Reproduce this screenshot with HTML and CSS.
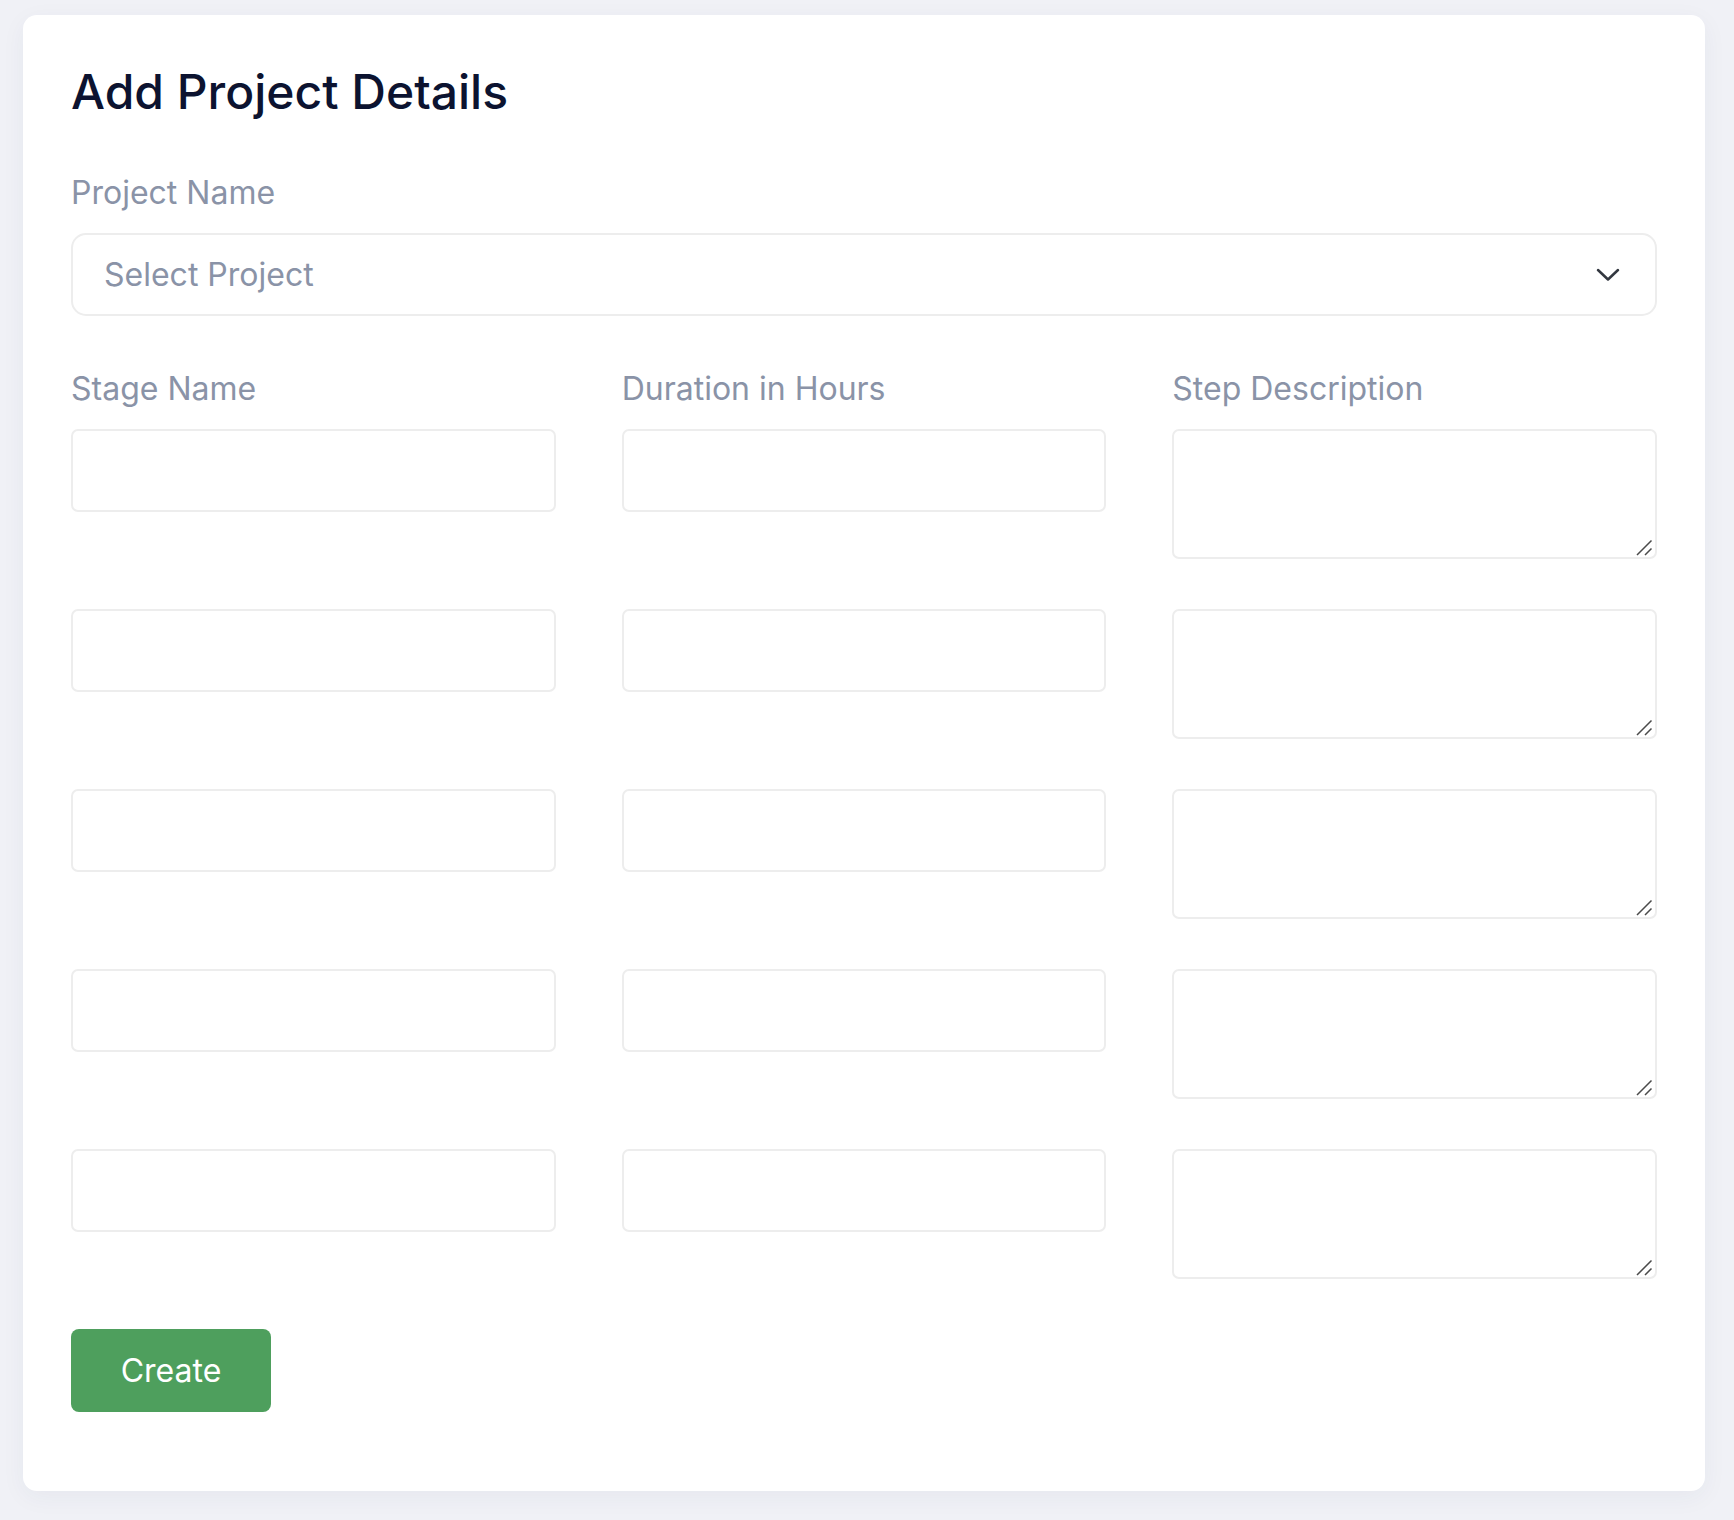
FILE: index.html
```html
<!DOCTYPE html>
<html lang="en">
<head>
<meta charset="utf-8">
<title>Add Project Details</title>
<link rel="stylesheet" href="styles.css">
</head>
<body>
<main class="card">
  <h1 class="title">Add Project Details</h1>
  <div class="field">
    <label class="label" for="project">Project Name</label>
    <div class="select-wrap">
      <select id="project" class="select">
        <option>Select Project</option>
      </select>
      <svg class="chevron" width="24" height="14" viewBox="0 0 24 14" aria-hidden="true">
        <path d="M2 2 L12 11.5 L22 2" fill="none" stroke="#333840" stroke-width="2.5" stroke-linecap="round" stroke-linejoin="round"/>
      </svg>
    </div>
  </div>
  <div class="grid-head">
    <span class="label">Stage Name</span>
    <span class="label">Duration in Hours</span>
    <span class="label">Step Description</span>
  </div>
  <div class="grid-rows">
    <input class="input" type="text"><input class="input" type="text">
    <div class="ta-wrap"><textarea class="textarea"></textarea><svg class="grip" width="18" height="18" viewBox="0 0 18 18" aria-hidden="true"><path d="M1 16 L15.5 1.5 M9 16 L15.5 9.5" stroke="#4a4a4a" stroke-width="1.5" fill="none"/></svg></div>
    <input class="input" type="text"><input class="input" type="text">
    <div class="ta-wrap"><textarea class="textarea"></textarea><svg class="grip" width="18" height="18" viewBox="0 0 18 18" aria-hidden="true"><path d="M1 16 L15.5 1.5 M9 16 L15.5 9.5" stroke="#4a4a4a" stroke-width="1.5" fill="none"/></svg></div>
    <input class="input" type="text"><input class="input" type="text">
    <div class="ta-wrap"><textarea class="textarea"></textarea><svg class="grip" width="18" height="18" viewBox="0 0 18 18" aria-hidden="true"><path d="M1 16 L15.5 1.5 M9 16 L15.5 9.5" stroke="#4a4a4a" stroke-width="1.5" fill="none"/></svg></div>
    <input class="input" type="text"><input class="input" type="text">
    <div class="ta-wrap"><textarea class="textarea"></textarea><svg class="grip" width="18" height="18" viewBox="0 0 18 18" aria-hidden="true"><path d="M1 16 L15.5 1.5 M9 16 L15.5 9.5" stroke="#4a4a4a" stroke-width="1.5" fill="none"/></svg></div>
    <input class="input" type="text"><input class="input" type="text">
    <div class="ta-wrap"><textarea class="textarea"></textarea><svg class="grip" width="18" height="18" viewBox="0 0 18 18" aria-hidden="true"><path d="M1 16 L15.5 1.5 M9 16 L15.5 9.5" stroke="#4a4a4a" stroke-width="1.5" fill="none"/></svg></div>
  </div>
  <button class="btn" type="button">Create</button>
</main>
</body>
</html>
```

FILE: styles.css
```css
* { box-sizing: border-box; }
html, body { margin: 0; }
body {
  background: #f0f1f6;
  font-family: "Inter", "Noto Sans", sans-serif;
  padding: 15px 29px 29px 23px;
  min-height: 1520px;
}
.card {
  background: #ffffff;
  border-radius: 14px;
  padding: 48px 48px 79px 48px;
  box-shadow: 0 6px 24px rgba(40, 50, 90, 0.05);
  display: flex;
  flex-direction: column;
  align-items: flex-start;
}
.title {
  margin: 0;
  font-size: 48px;
  line-height: 58px;
  font-weight: 500;
  color: #0c1330;
}
.field { width: 100%; margin-top: 54px; }
.label {
  display: block;
  font-size: 32px;
  line-height: 36px;
  font-weight: 400;
  color: #8a93a7;
}
.select-wrap {
  position: relative;
  margin-top: 22px;
}
.select {
  appearance: none;
  -webkit-appearance: none;
  width: 100%;
  height: 83px;
  border: 2px solid #ededed;
  border-radius: 15px;
  background: #fff;
  padding: 0 31px;
  font-family: inherit;
  font-size: 32px;
  color: #8a93a7;
  outline: none;
}
.chevron {
  position: absolute;
  right: 37px;
  top: 35px;
}
.grid-head {
  width: 100%;
  margin-top: 55px;
  display: grid;
  grid-template-columns: repeat(3, 1fr);
  column-gap: 66px;
}
.grid-rows {
  width: 100%;
  margin-top: 22px;
  display: grid;
  grid-template-columns: repeat(3, 1fr);
  column-gap: 66px;
  row-gap: 50px;
  align-items: start;
}
.input, .textarea {
  width: 100%;
  border: 2px solid #ededed;
  border-radius: 7px;
  background: #fff;
  font-family: inherit;
  font-size: 24px;
  outline: none;
  margin: 0;
}
.input { height: 83px; padding: 0 20px; }
.ta-wrap { position: relative; }
.textarea { height: 130px; padding: 16px 20px; resize: none; display: block; }
.grip {
  position: absolute;
  right: 3px;
  bottom: 2px;
  pointer-events: none;
}
.btn {
  margin-top: 50px;
  width: 200px;
  height: 83px;
  border: none;
  border-radius: 8px;
  background: #4e9f5d;
  color: #ffffff;
  font-family: inherit;
  font-size: 32px;
  font-weight: 400;
  cursor: pointer;
}
```
